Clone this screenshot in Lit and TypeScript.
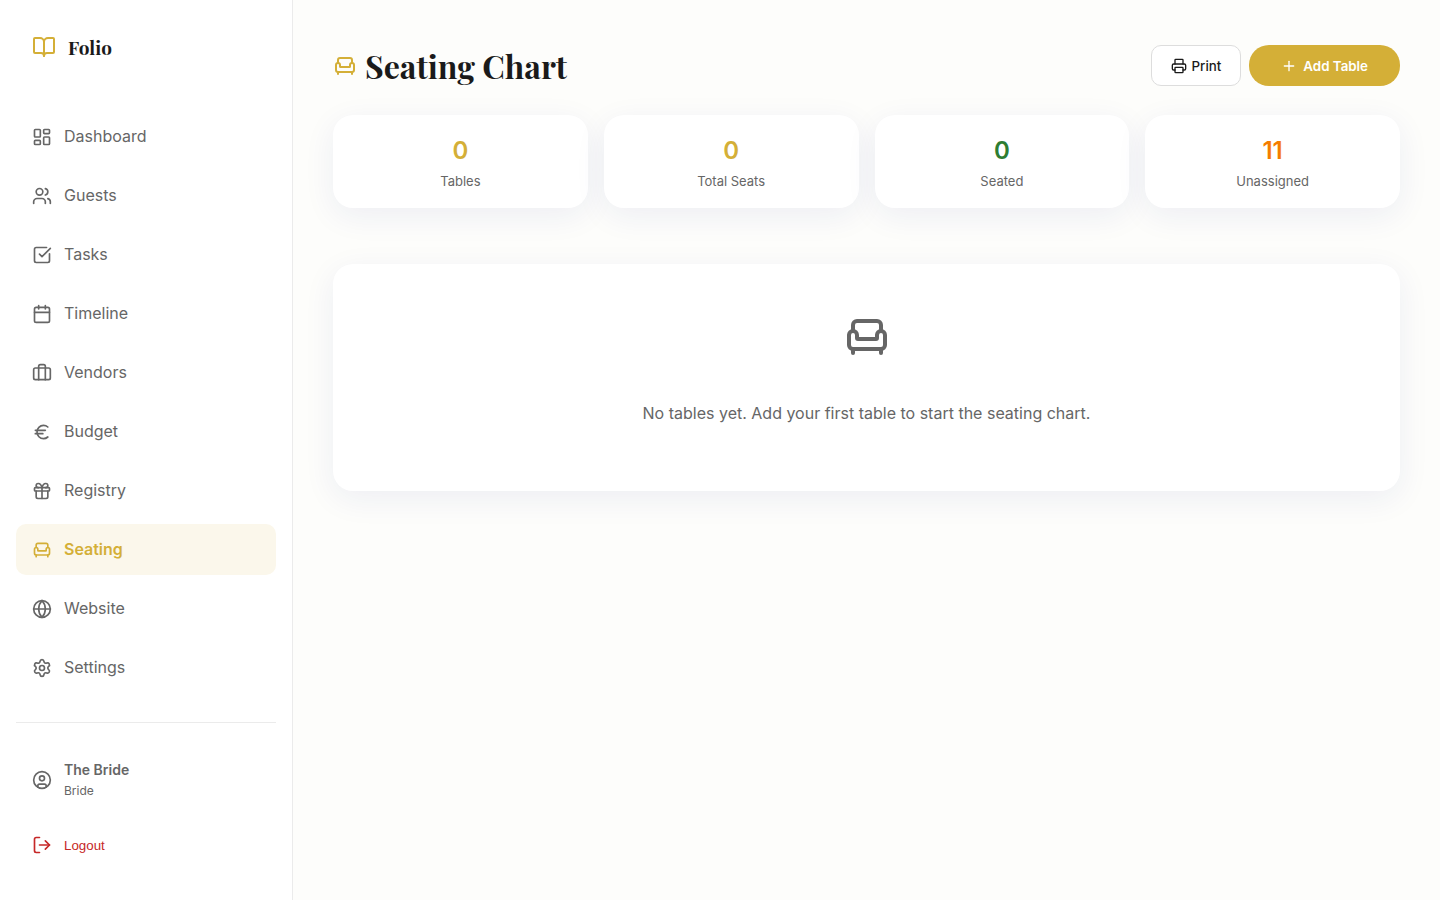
import { LitElement, html, css, svg, type TemplateResult } from "lit";
import { customElement, property } from "lit/decorators.js";

const icons: Record<string, TemplateResult> = {
  openBook: svg`<path d="M12 7v14"/><path d="M3 18a1 1 0 0 1-1-1V4a1 1 0 0 1 1-1h5a4 4 0 0 1 4 4 4 4 0 0 1 4-4h5a1 1 0 0 1 1 1v13a1 1 0 0 1-1 1h-6a3 3 0 0 0-3 3 3 3 0 0 0-3-3z"/>`,
  dashboard: svg`<rect width="7" height="9" x="3" y="3" rx="1"/><rect width="7" height="5" x="14" y="3" rx="1"/><rect width="7" height="9" x="14" y="12" rx="1"/><rect width="7" height="5" x="3" y="16" rx="1"/>`,
  guests: svg`<path d="M16 21v-2a4 4 0 0 0-4-4H6a4 4 0 0 0-4 4v2"/><circle cx="9" cy="7" r="4"/><path d="M22 21v-2a4 4 0 0 0-3-3.87"/><path d="M16 3.13a4 4 0 0 1 0 7.75"/>`,
  tasks: svg`<path d="M21 10.5V19a2 2 0 0 1-2 2H5a2 2 0 0 1-2-2V5a2 2 0 0 1 2-2h12.5"/><path d="m9 11 3 3L22 4"/>`,
  calendar: svg`<path d="M8 2v4"/><path d="M16 2v4"/><rect width="18" height="18" x="3" y="4" rx="2"/><path d="M3 10h18"/>`,
  vendors: svg`<path d="M16 20V4a2 2 0 0 0-2-2h-4a2 2 0 0 0-2 2v16"/><rect width="20" height="14" x="2" y="6" rx="2"/>`,
  euro: svg`<path d="M4 10h12"/><path d="M4 14h9"/><path d="M19 6a7.7 7.7 0 0 0-5.2-2A7.9 7.9 0 0 0 6 12c0 4.4 3.5 8 7.8 8 2 0 3.8-.8 5.2-2"/>`,
  gift: svg`<rect x="3" y="8" width="18" height="4" rx="1"/><path d="M12 8v13"/><path d="M19 12v7a2 2 0 0 1-2 2H7a2 2 0 0 1-2-2v-7"/><path d="M7.5 8a2.5 2.5 0 0 1 0-5A4.8 8 0 0 1 12 8a4.8 8 0 0 1 4.5-5 2.5 2.5 0 0 1 0 5"/>`,
  sofa: svg`<path d="M19 9V6a2 2 0 0 0-2-2H7a2 2 0 0 0-2 2v3"/><path d="M3 16a2 2 0 0 0 2 2h14a2 2 0 0 0 2-2v-5a2 2 0 0 0-4 0v1.5a.5.5 0 0 1-.5.5h-9a.5.5 0 0 1-.5-.5V11a2 2 0 0 0-4 0z"/><path d="M5 18v2"/><path d="M19 18v2"/>`,
  globe: svg`<circle cx="12" cy="12" r="10"/><path d="M12 2a14.5 14.5 0 0 0 0 20 14.5 14.5 0 0 0 0-20"/><path d="M2 12h20"/>`,
  settings: svg`<path d="M9.671 4.136a2.34 2.34 0 0 1 4.659 0 2.34 2.34 0 0 0 3.319 1.915 2.34 2.34 0 0 1 2.33 4.033 2.34 2.34 0 0 0 0 3.831 2.34 2.34 0 0 1-2.33 4.033 2.34 2.34 0 0 0-3.319 1.915 2.34 2.34 0 0 1-4.659 0 2.34 2.34 0 0 0-3.32-1.915 2.34 2.34 0 0 1-2.33-4.033 2.34 2.34 0 0 0 0-3.831A2.34 2.34 0 0 1 6.35 6.051a2.34 2.34 0 0 0 3.319-1.915"/><circle cx="12" cy="12" r="3"/>`,
  user: svg`<circle cx="12" cy="12" r="10"/><circle cx="12" cy="10" r="3"/><path d="M7 20.662V19a2 2 0 0 1 2-2h6a2 2 0 0 1 2 2v1.662"/>`,
  logout: svg`<path d="M9 21H5a2 2 0 0 1-2-2V5a2 2 0 0 1 2-2h4"/><path d="m16 17 5-5-5-5"/><path d="M21 12H9"/>`,
  printer: svg`<path d="M6 18H4a2 2 0 0 1-2-2v-5a2 2 0 0 1 2-2h16a2 2 0 0 1 2 2v5a2 2 0 0 1-2 2h-2"/><path d="M6 9V3a1 1 0 0 1 1-1h10a1 1 0 0 1 1 1v6"/><rect x="6" y="14" width="12" height="8" rx="1"/>`,
  plus: svg`<path d="M5 12h14"/><path d="M12 5v14"/>`,
};

@customElement("line-icon")
class LineIcon extends LitElement {
  @property() name = "";
  @property({ type: Number }) size = 20;

  static styles = css`
    :host { display: inline-flex; flex: none; }
    .glyph { display: block; fill: none; stroke: currentColor; stroke-width: 2; stroke-linecap: round; stroke-linejoin: round; }
  `;

  render() {
    return html`<svg class="glyph" width=${this.size} height=${this.size} viewBox="0 0 24 24" aria-hidden="true">${icons[this.name]}</svg>`;
  }
}

const links = [
  ["dashboard", "Dashboard"],
  ["guests", "Guests"],
  ["tasks", "Tasks"],
  ["calendar", "Timeline"],
  ["vendors", "Vendors"],
  ["euro", "Budget"],
  ["gift", "Registry"],
  ["sofa", "Seating"],
  ["globe", "Website"],
  ["settings", "Settings"],
];

const stats = [
  { value: 0, label: "Tables", tone: "gold" },
  { value: 0, label: "Total Seats", tone: "gold" },
  { value: 0, label: "Seated", tone: "green" },
  { value: 11, label: "Unassigned", tone: "orange" },
];

@customElement("app-root")
class AppRoot extends LitElement {
  static styles = css`
    :host {
      --gold: #d4af37;
      --muted: #666666;
      --line: #ebebeb;
      --ink: #1a1a1a;
      display: flex;
      min-height: 100vh;
      background: #fdfdfb;
      color: var(--ink);
      font-family: Inter, "Liberation Sans", sans-serif;
      font-size: 16px;
      line-height: 27px;
    }
    * { box-sizing: border-box; }
    .sidebar {
      display: flex;
      flex-direction: column;
      flex: none;
      width: 293px;
      padding: 32px 16px;
      background: #ffffff;
      border-right: 1px solid var(--line);
    }
    .brand {
      display: flex;
      align-items: center;
      gap: 12px;
      padding: 0 16px;
      height: 30px;
      margin-bottom: 49px;
      color: var(--gold);
    }
    .brand-name, .title { font-family: "Playfair Display", "Liberation Serif", serif; font-weight: 700; }
    .brand-name { font-size: 19px; color: var(--ink); }
    .links { display: flex; flex-direction: column; gap: 8px; }
    .link {
      display: flex;
      align-items: center;
      gap: 12px;
      padding: 12px 16px;
      border-radius: 10px;
      color: var(--muted);
      text-decoration: none;
    }
    .link.active { background: #fbf7eb; color: var(--gold); font-weight: 600; }
    .account {
      margin-top: 29px;
      padding-top: 24px;
      border-top: 1px solid var(--line);
    }
    .profile {
      display: flex;
      align-items: center;
      gap: 12px;
      padding: 12px 16px;
      color: var(--muted);
    }
    .who { display: flex; flex-direction: column; font-size: 12px; line-height: 20px; }
    .who strong { font-size: 14px; line-height: 22px; font-weight: 600; }
    .logout {
      display: flex;
      align-items: center;
      gap: 12px;
      width: 100%;
      margin-top: 10px;
      padding: 12px 16px;
      border: 0;
      background: none;
      color: #c62828;
      text-align: left;
    }
    .main { flex: 1; min-width: 0; padding: 40px; }
    .head {
      display: flex;
      justify-content: space-between;
      align-items: center;
      height: 51px;
      margin-bottom: 24px;
    }
    .title { display: flex; align-items: center; gap: 8px; margin: 0; font-size: 32px; line-height: 52px; }
    .title line-icon { color: var(--gold); }
    .actions { display: flex; gap: 8px; }
    .button {
      display: flex;
      align-items: center;
      justify-content: center;
      height: 41px;
      border-radius: 10px;
      font-family: inherit;
    }
    .print { gap: 5px; padding: 0 19px; border: 1px solid #dddddd; background: #ffffff; color: var(--ink); font-weight: 500; }
    .add { gap: 6px; padding: 0 32px; border: 0; border-radius: 20px; background: var(--gold); color: #ffffff; font-weight: 600; }
    .stats { display: grid; grid-template-columns: repeat(4, 1fr); gap: 16px; margin-bottom: 56px; }
    .card {
      border-radius: 20px;
      background: #ffffff;
      box-shadow: 0 8px 32px rgba(31, 38, 135, 0.07);
      text-align: center;
      color: var(--muted);
    }
    .stat { padding: 16px 16px 17px; font-size: 13px; }
    .value { font-size: 24px; line-height: 40px; font-weight: 600; }
    .label { line-height: 20px; }
    .gold { color: var(--gold); }
    .green { color: #2e7d32; }
    .orange { color: #f57c00; }
    .empty { display: flex; flex-direction: column; align-items: center; gap: 39px; padding: 49px 24px 64px; }
    .empty-text { margin: 0; }
  `;

  render() {
    return html`
      <aside class="sidebar">
        <div class="brand"><line-icon name="openBook" size="24"></line-icon><span class="brand-name">Folio</span></div>
        <nav class="links">
          ${links.map(([icon, label]) => html`
            <a class="link ${label === "Seating" ? "active" : ""}" href="#${label.toLowerCase()}">
              <line-icon name=${icon}></line-icon>${label}
            </a>`)}
        </nav>
        <div class="account">
          <div class="profile">
            <line-icon name="user"></line-icon>
            <div class="who"><strong>The Bride</strong><span>Bride</span></div>
          </div>
          <button class="logout" type="button"><line-icon name="logout"></line-icon>Logout</button>
        </div>
      </aside>
      <main class="main">
        <header class="head">
          <h1 class="title"><line-icon name="sofa" size="24"></line-icon>Seating Chart</h1>
          <div class="actions">
            <button class="button print" type="button"><line-icon name="printer" size="16"></line-icon>Print</button>
            <button class="button add" type="button"><line-icon name="plus" size="16"></line-icon>Add Table</button>
          </div>
        </header>
        <section class="stats">
          ${stats.map((s) => html`
            <div class="card stat">
              <div class="value ${s.tone}">${s.value}</div>
              <div class="label">${s.label}</div>
            </div>`)}
        </section>
        <section class="card empty">
          <line-icon name="sofa" size="48"></line-icon>
          <p class="empty-text">No tables yet. Add your first table to start the seating chart.</p>
        </section>
      </main>
    `;
  }
}
